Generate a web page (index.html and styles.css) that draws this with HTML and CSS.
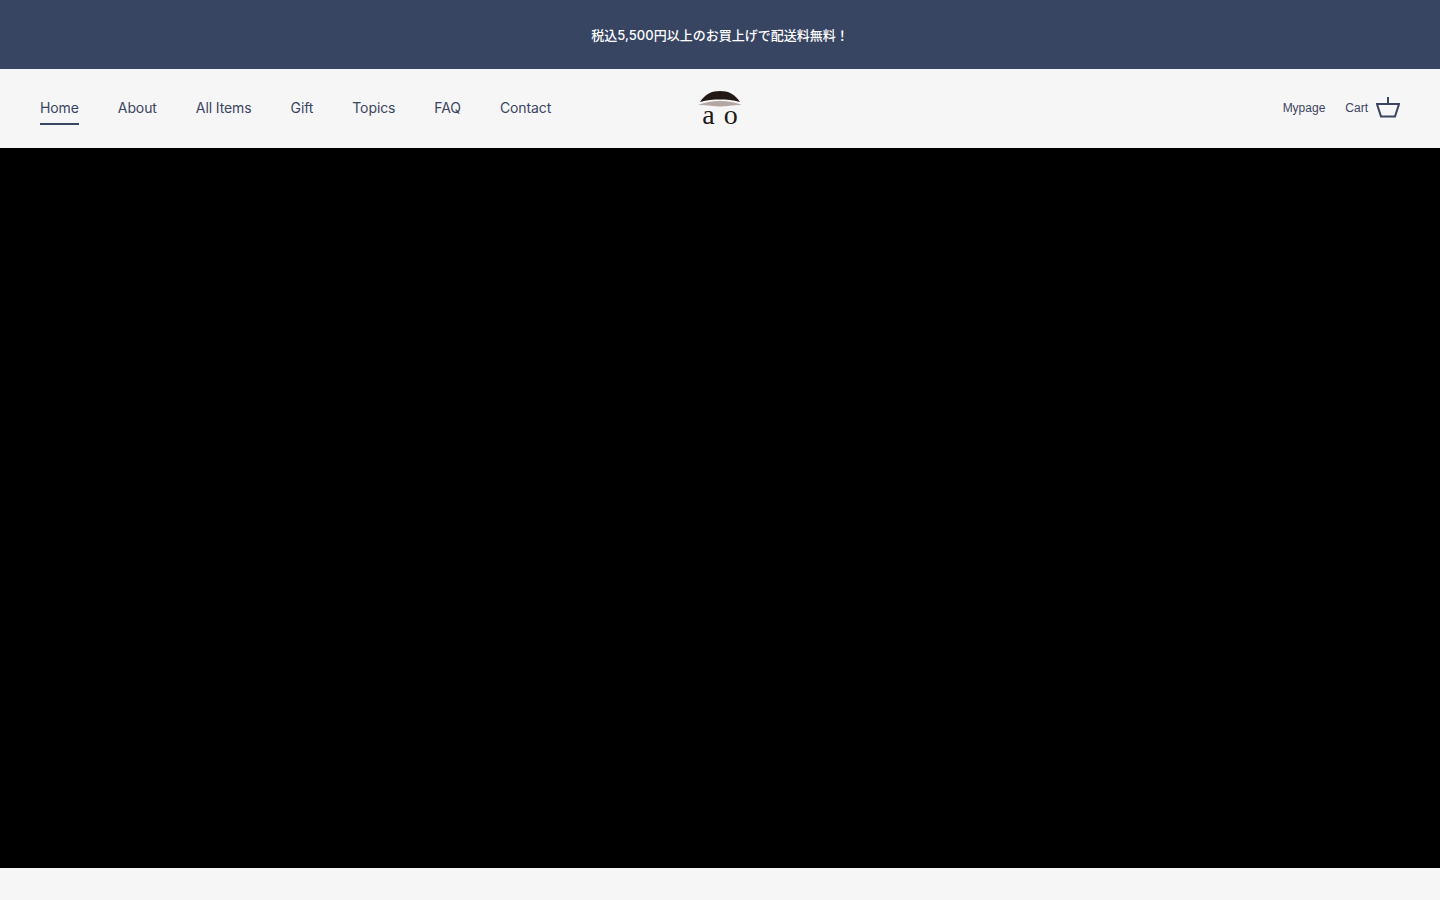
FILE: index.html
```html
<!DOCTYPE html>
<html lang="ja">
<head>
    <meta charset="UTF-8">
    <meta name="viewport" content="width=device-width, initial-scale=1.0">
    <title>ao</title>
    <link rel="stylesheet" href="styles.css">
</head>
<body>

    <div class="announcement-bar">
        <p>税込5,500円以上のお買上げで配送料無料！</p>
    </div>

    <header class="site-header">
        <nav class="main-nav">
            <a href="#" class="active">Home</a>
            <a href="#">About</a>
            <a href="#">All Items</a>
            <a href="#">Gift</a>
            <a href="#">Topics</a>
            <a href="#">FAQ</a>
            <a href="#">Contact</a>
        </nav>

        <a href="#" class="logo">
            <svg class="logo-mark" width="46" height="17" viewBox="0 0 46 17">
                <path d="M3 12C8 4 15 1 23 1S38 4 43 12C36 10 30 9.500 23 9.500S10 10 3 12Z" fill="#231815"/>
                <path d="M1 15C8 12.500 15 11 23 11S38 12.500 45 15C38 14.500 30 16.500 23 16.500S8 14.500 1 15Z" fill="#b5a6a4"/>
            </svg>
            <span class="logo-text">a o</span>
        </a>

        <div class="header-links">
            <a href="#">Mypage</a>
            <a href="#" class="cart-link">
                Cart
                <svg width="24" height="21" viewBox="0 0 24 21" fill="none" stroke="#3a4562" stroke-width="2">
                    <path d="M12 0V7"/>
                    <path d="M1 7H23L19 19.500H5Z"/>
                </svg>
            </a>
        </div>
    </header>

    <div class="hero"></div>

    <div class="page-rest"></div>

</body>
</html>
```

FILE: styles.css
```css
/* Basic reset */
body, html {
    margin: 0;
    padding: 0;
    background-color: #f6f6f6;
    font-family: "Liberation Sans", Arial, sans-serif;
}

/* Announcement bar */
.announcement-bar {
    height: 69px;
    display: flex;
    align-items: center;
    justify-content: center;
    background-color: #374562;
}

.announcement-bar p {
    margin: 0;
    font-family: Inter, "Noto Sans CJK JP", sans-serif;
    font-size: 13px;
    font-weight: 500;
    color: #ffffff;
}

/* Header */
.site-header {
    height: 79px;
    padding: 0 40px 2px;
    box-sizing: border-box;
    display: flex;
    align-items: center;
    justify-content: space-between;
    position: relative;
    background-color: #f6f6f6;
}

.main-nav {
    display: flex;
    gap: 39px;
}

.main-nav a {
    padding: 7px 0;
    border-bottom: 2px solid transparent;
    margin-top: 2px;
    font-family: Inter, sans-serif;
    font-size: 14px;
    line-height: 16px;
    letter-spacing: -0.1px;
    color: #3a4562;
    text-decoration: none;
}

.main-nav a.active {
    border-bottom-color: #3a4562;
}

/* Logo sits in the middle of the bar whatever the sides measure */
.logo {
    position: absolute;
    left: 50%;
    top: 21px;
    transform: translateX(-50%);
    display: flex;
    flex-direction: column;
    align-items: center;
    text-decoration: none;
}

.logo-mark {
    display: block;
}

.logo-text {
    margin-top: -3px;
    padding-left: 1px;
    font-family: "Liberation Serif", serif;
    font-size: 28px;
    line-height: 22px;
    letter-spacing: 1px;
    color: #231815;
    white-space: pre;
}

.header-links {
    display: flex;
    align-items: center;
    gap: 20px;
}

.header-links a {
    font-size: 12px;
    color: #3a4562;
    text-decoration: none;
}

.cart-link {
    display: flex;
    align-items: center;
    gap: 8px;
}

/* Hero is an empty black video area */
.hero {
    height: 720px;
    background-color: #000000;
}

.page-rest {
    height: 32px;
    background-color: #f6f6f6;
}
```
